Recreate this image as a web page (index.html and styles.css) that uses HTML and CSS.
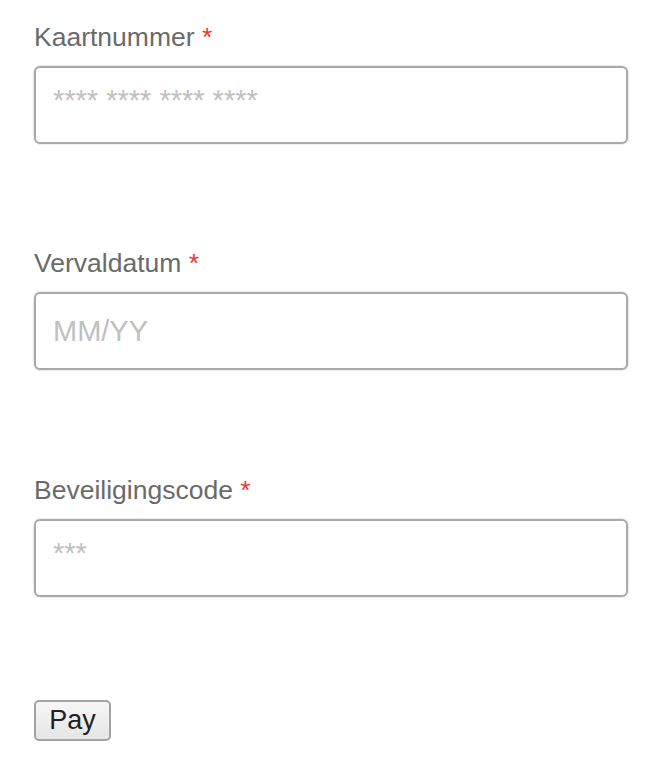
FILE: index.html
```html
<!DOCTYPE html>
<html lang="nl">
<head>
<meta charset="utf-8">
<title>Betaling</title>
<link rel="stylesheet" href="styles.css">
</head>
<body>
<form class="pay-form">
  <div class="field">
    <label class="label" for="cc">Kaartnummer <span class="req">*</span></label>
    <input class="input input--mask" id="cc" type="text" placeholder="**** **** **** ****">
  </div>
  <div class="field">
    <label class="label" for="exp">Vervaldatum <span class="req">*</span></label>
    <input class="input" id="exp" type="text" placeholder="MM/YY">
  </div>
  <div class="field">
    <label class="label" for="cvc">Beveiligingscode <span class="req">*</span></label>
    <input class="input input--mask" id="cvc" type="text" placeholder="***">
  </div>
  <button class="btn" type="button">Pay</button>
</form>
</body>
</html>
```
FILE: styles.css
```css
html, body {
  margin: 0;
  padding: 0;
  background: #ffffff;
}
body {
  font-family: "Liberation Sans", Arial, sans-serif;
}
.pay-form {
  display: flex;
  flex-direction: column;
  align-items: flex-start;
  padding: 22px 31px 0 34px;
}
.field {
  display: flex;
  flex-direction: column;
  width: 594px;
  margin-bottom: 104px;
}
.field:nth-child(2) {
  margin-bottom: 105px;
}
.label {
  font-size: 26.5px;
  line-height: 30px;
  color: #6a6a6a;
  margin-bottom: 14px;
}
.req {
  color: #ee3333;
}
.input {
  box-sizing: border-box;
  width: 594px;
  height: 78px;
  margin: 0;
  padding: 0 17px;
  border: 2px solid #a9a9a9;
  border-radius: 6px;
  box-shadow: 0 0 1px 1px rgba(0, 0, 0, 0.08);
  background: #ffffff;
  font-family: "Liberation Sans", Arial, sans-serif;
  font-size: 29px;
  color: #333;
  outline: none;
}
.input--mask {
  padding-bottom: 9px;
}
.input::placeholder {
  color: #c0c0c0;
  opacity: 1;
}
.btn {
  box-sizing: border-box;
  width: 77px;
  height: 41px;
  margin: -1px 0 0 0;
  padding: 0;
  border: 2px solid #a3a3a3;
  border-radius: 5px;
  background: linear-gradient(#f6f6f6, #e6e6e6);
  font-family: "Liberation Sans", Arial, sans-serif;
  font-size: 27px;
  color: #222222;
  line-height: 37px;
}
```
